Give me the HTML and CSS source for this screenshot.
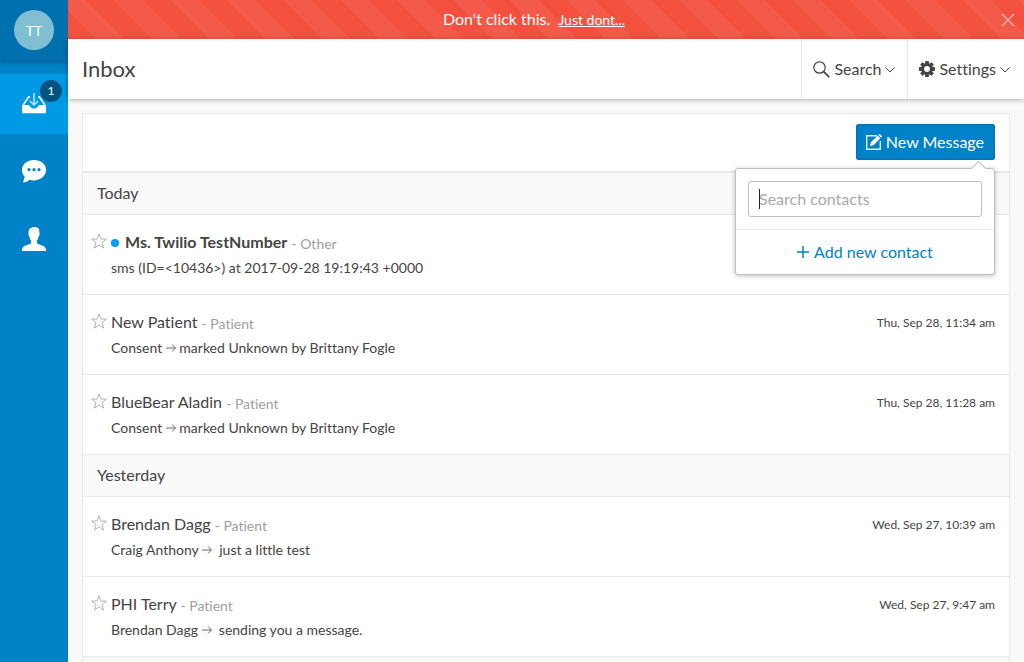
FILE: index.html
```html
<!DOCTYPE html>
<html lang="en">
<head>
<meta charset="utf-8">
<meta name="viewport" content="width=device-width, initial-scale=1">
<title>Inbox</title>
<link rel="stylesheet" href="styles.css">
</head>
<body>
<svg class="sprite" aria-hidden="true">
  <symbol id="star" viewBox="0 0 16 16"><path d="M8 .9l1.900 5.200h5.400l-4.300 3.400 1.600 5.600L8 11.800l-4.600 3.300L5 9.500.7 6.100h5.400z" fill="none" stroke="#aaa" stroke-width=".9"/></symbol>
  <symbol id="arrow" viewBox="0 0 10 10"><path d="M0 5h9.300M6 1.500L9.500 5 6 8.500" fill="none" stroke="#444" stroke-width=".8"/></symbol>
  <symbol id="chevron" viewBox="0 0 10 6"><path d="M.5.5L5 5 9.500.5" fill="none" stroke="#444" stroke-width="1"/></symbol>
</svg>
<div class="app">
  <nav class="sidebar" aria-label="Main">
    <button class="account" type="button"><span class="avatar">TT</span></button>
    <ul class="nav-list">
      <li><a class="nav-item active" href="#inbox" aria-label="Inbox, 1 unread">
        <svg width="24" height="22" viewBox="0 0 24 22"><path d="M8 5H6.500L1.200 13M16 5h1.500l5.300 8" fill="none" stroke="#fff" stroke-width="1.600"/><path d="M0 13h6.500c1.300 0 1.800 3.600 5.500 3.600s4.200-3.600 5.500-3.600H24v7.500a.8.8 0 0 1-.8.8H.8a.8.8 0 0 1-.8-.8z" fill="#fff"/><path d="M12 1v11.500M8 9l4 4 4-4" fill="none" stroke="#c2e6fa" stroke-width="1.500"/></svg>
        <span class="badge">1</span></a></li>
      <li><a class="nav-item" href="#chat" aria-label="Conversations">
        <svg width="24" height="24" viewBox="0 0 24 24"><path fill="#fff" d="M12 1C5.200 1 0 5.200 0 10.700c0 3.200 1.200 5.400 2.700 7L1 23.300c3 0 4.900-1 6.300-2.600 1.400.5 3 .7 4.700.7 6.800 0 12-4.800 12-10.700S18.800 1 12 1z"/><g fill="#0082c8"><circle cx="7" cy="10.700" r="1.600"/><circle cx="12" cy="10.700" r="1.600"/><circle cx="17" cy="10.700" r="1.600"/></g></svg></a></li>
      <li><a class="nav-item" href="#people" aria-label="Contacts">
        <svg width="24" height="24" viewBox="0 0 24 24"><path fill="#fff" d="M12.200 0c3.800 0 5.500 1.400 5.100 5.500l.3.400c0 1.900-.4 3.300-1.100 3.800-.3 1.900-.8 3-1.500 3.800v2.200c0 1.100 1.200 1.400 3.200 2 3.600 1 5.800 2 5.800 6.300H0c0-4.300 2.200-5.300 5.800-6.300 2-.6 3.200-.9 3.200-2v-2.200c-.7-.8-1.200-1.900-1.500-3.800-.7-.5-1.100-1.900-1.100-3.800l.3-.4C6.300 2.500 8 .5 12.200 0z"/></svg></a></li>
    </ul>
  </nav>
  <div class="main">
    <div class="alert" role="alert">
      <p class="alert-text">Don't click this. <a href="#dont">Just dont...</a></p>
      <button class="close" type="button" aria-label="Dismiss"><svg width="14" height="14" viewBox="0 0 14 14"><path d="M1 1l12 12M13 1L1 13" stroke="#fbb5ad" stroke-width="1.200"/></svg></button>
    </div>
    <header class="header">
      <h1>Inbox</h1>
      <button class="menu" type="button"><svg width="17" height="17" viewBox="0 0 17 17"><g fill="none" stroke="#444"><circle cx="6.500" cy="6.500" r="5.700" stroke-width="1.200"/><path d="M10.700 10.700l5.500 5.500" stroke-width="1.800"/></g></svg><span>Search</span><svg class="chevron" width="10" height="6"><use href="#chevron"/></svg></button>
      <button class="menu" type="button"><svg width="16" height="16" viewBox="-8 -8 16 16"><g fill="#444"><g id="teeth"><rect x="-1.900" y="-8" width="3.800" height="16" rx=".6"/><rect x="-8" y="-1.900" width="16" height="3.800" rx=".6"/></g><use href="#teeth" transform="rotate(45)"/><circle r="6"/></g><circle r="2.900" fill="#fff"/></svg><span>Settings</span><svg class="chevron" width="10" height="6"><use href="#chevron"/></svg></button>
    </header>
    <main class="content">
      <section class="card">
        <div class="toolbar">
          <div class="compose">
            <button class="primary" type="button"><svg width="16" height="16" viewBox="0 0 16 16"><path d="M11 1.700H.7v13.600h13.600V7" fill="none" stroke="#e2f2fb" stroke-width="1.400"/><path d="M4 12l1-3.700L11.700 1.600l2.700 2.700L7.700 11zM12.400.9l.7-.7q.5-.4 1 0l1.700 1.700q.4.500 0 1l-.7.7z" fill="#fff"/></svg><span>New Message</span></button>
            <div class="popover">
              <div class="search"><input type="text" placeholder="Search contacts" aria-label="Search contacts" autofocus><span class="caret"></span></div>
              <button class="add" type="button"><svg width="12" height="12" viewBox="0 0 12 12"><path d="M6 0v12M0 6h12" stroke="#0082c8" stroke-width="1.500"/></svg><span>Add new contact</span></button>
            </div>
          </div>
        </div>
        <h2 class="day">Today</h2>
        <article class="row">
          <button class="star" type="button" aria-label="Star"><svg width="16" height="16"><use href="#star"/></svg></button>
          <div class="message"><p class="name"><span class="dot"></span><strong>Ms. Twilio TestNumber</strong> <small>- Other</small></p><p class="preview">sms (ID=&lt;10436&gt;) at 2017-09-28 19:19:43 +0000</p></div>
        </article>
        <article class="row">
          <button class="star" type="button" aria-label="Star"><svg width="16" height="16"><use href="#star"/></svg></button>
          <div class="message"><p class="name">New Patient <small>- Patient</small></p><p class="preview">Consent <svg width="10" height="10"><use href="#arrow"/></svg> marked Unknown by Brittany Fogle</p></div>
          <time>Thu, Sep 28, 11:34 am</time>
        </article>
        <article class="row">
          <button class="star" type="button" aria-label="Star"><svg width="16" height="16"><use href="#star"/></svg></button>
          <div class="message"><p class="name">BlueBear Aladin <small>- Patient</small></p><p class="preview">Consent <svg width="10" height="10"><use href="#arrow"/></svg> marked Unknown by Brittany Fogle</p></div>
          <time>Thu, Sep 28, 11:28 am</time>
        </article>
        <h2 class="day">Yesterday</h2>
        <article class="row">
          <button class="star" type="button" aria-label="Star"><svg width="16" height="16"><use href="#star"/></svg></button>
          <div class="message"><p class="name">Brendan Dagg <small>- Patient</small></p><p class="preview">Craig Anthony <svg width="10" height="10"><use href="#arrow"/></svg>&nbsp; just a little test</p></div>
          <time>Wed, Sep 27, 10:39 am</time>
        </article>
        <article class="row">
          <button class="star" type="button" aria-label="Star"><svg width="16" height="16"><use href="#star"/></svg></button>
          <div class="message"><p class="name">PHI Terry <small>- Patient</small></p><p class="preview">Brendan Dagg <svg width="10" height="10"><use href="#arrow"/></svg>&nbsp; sending you a message.</p></div>
          <time>Wed, Sep 27, 9:47 am</time>
        </article>
        <div class="day"></div>
      </section>
    </main>
  </div>
</div>
</body>
</html>
```

FILE: styles.css
```css
* { box-sizing: border-box; }
body { margin: 0; font: 16px/24px Lato, sans-serif; font-variant-ligatures: none; color: #444; background: #f9f9f9; }
button, input { font: inherit; font-variant-ligatures: none; color: inherit; }
button { border: 0; padding: 0; background: none; cursor: pointer; }
h1, h2, p, ul { margin: 0; padding: 0; font-weight: 400; }
svg { flex: none; }
.sprite { display: none; }
.app { display: flex; height: 100vh; overflow: hidden; }
.sidebar { flex: 0 0 68px; background: #0082c8; }
.account { display: flex; width: 100%; height: 60px; align-items: center; justify-content: center; background: #0070ae; box-shadow: 0 1px 6px rgba(0, 0, 0, .4); }
.avatar { width: 40px; height: 40px; border-radius: 50%; background: #80bfd2; color: #fff; font-size: 14px; line-height: 42px; }
.nav-list { display: grid; gap: 8px; padding-top: 14px; list-style: none; }
.nav-item { position: relative; display: flex; height: 60px; align-items: center; justify-content: center; padding-bottom: 2px; }
.active { background: #0099e6; }
.badge { position: absolute; top: 6px; right: 6px; width: 22px; height: 22px; border-radius: 50%; background: #00527f; color: #fff; font-size: 12px; line-height: 22px; text-align: center; }
.main { display: flex; flex: 1; min-width: 0; flex-direction: column; }
.alert { display: flex; height: 39px; flex: none; align-items: center; gap: 10px; padding: 0 9px; color: #fff; background: repeating-linear-gradient(45deg, #f35040 0 20px, #f45a49 20px 40px); }
.alert-text { flex: 1; text-align: center; }
.alert a { margin-left: 4px; color: #fff; font-size: 14px; }
.close { display: flex; }
.header { z-index: 1; display: flex; height: 60px; flex: none; padding-left: 14px; background: #fff; box-shadow: 0 1px 5px rgba(0, 0, 0, .3); }
h1 { flex: 1; font-size: 22px; line-height: 60px; }
.menu { display: flex; align-items: center; gap: 4px; padding: 0 12px 0 11px; border-left: 1px solid #e8e8e8; }
.menu + .menu { padding-right: 14px; }
.chevron { margin-top: 2px; }
.content { flex: 1; min-height: 0; padding: 14px 14px 0; }
.card { border: 1px solid #e8e8e8; background: #fff; }
.toolbar { display: flex; justify-content: flex-end; padding: 10px 14px 11px; border-bottom: 2px solid #e8e8e8; }
.compose { position: relative; }
.primary { display: flex; height: 36px; align-items: center; gap: 4px; padding: 0 11px 0 10px; border-radius: 3px; background: #0082c8; color: #fff; box-shadow: inset 0 0 3px #005a8b; }
.popover { position: absolute; z-index: 2; top: 44px; right: 0; width: 260px; border: 1px solid #c0c0c0; border-radius: 3px; background: #fff; box-shadow: 0 1px 5px rgba(0, 0, 0, .25); }
.popover::before { content: ""; position: absolute; top: -6px; right: 10px; width: 10px; height: 10px; border: solid #c0c0c0; border-width: 1px 0 0 1px; background: #fff; transform: rotate(45deg); }
.search { position: relative; padding: 12px; border-bottom: 1px solid #e8e8e8; }
.search input { display: block; width: 100%; height: 36px; padding: 0 10px 2px; border: 1px solid #c0c0c0; border-radius: 3px; outline: 0; background: #fff; caret-color: transparent; }
.search input::placeholder { color: #aaa; opacity: 1; }
.caret { position: absolute; top: 20px; left: 23px; width: 1px; height: 20px; background: #222; visibility: hidden; }
.search input:focus + .caret { visibility: visible; }
.search input:not(:placeholder-shown) { caret-color: #222; }
.search input:not(:placeholder-shown) + .caret { visibility: hidden; }
.add { display: flex; width: 100%; height: 44px; align-items: center; justify-content: center; gap: 5px; color: #0082c8; }
.day { min-height: 42px; padding: 0 14px; border-bottom: 1px solid #e8e8e8; background: #f9f9f9; font-size: 16px; line-height: 40px; }
.row { display: flex; height: 80px; padding: 15px 14px 0 8px; border-bottom: 1px solid #e8e8e8; }
.star { display: flex; height: 16px; margin: 3px 4px 0 0; }
.message { flex: 1; min-width: 0; }
.name { height: 24px; }
.name small { color: #a0a0a0; font-size: 14px; vertical-align: -1px; }
.dot { display: inline-block; width: 8px; height: 8px; margin-right: 6px; border-radius: 50%; background: #009dff; vertical-align: 1px; }
.preview { padding-top: 2px; font-size: 14px; }
time { padding-top: 1px; font-size: 12px; }
```
